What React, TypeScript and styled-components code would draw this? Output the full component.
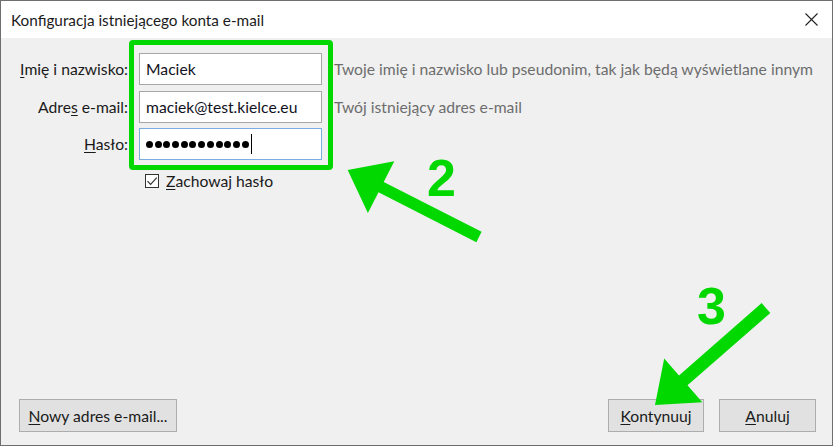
import React from "react";
import styled, { createGlobalStyle } from "styled-components";

const GREEN = "#00d800";
const FONT = `"Lato", "Noto Sans", sans-serif`;

const GlobalStyle = createGlobalStyle`
  html, body { margin: 0; padding: 0; background: #ffffff; }
  body { font-family: ${FONT}; }
  * { box-sizing: border-box; }
`;

const Window = styled.div`
  position: relative;
  width: 833px;
  height: 446px;
  border: 1px solid #6e6e6e;
  display: flex;
  flex-direction: column;
  background: #f0f0f0;
  font-family: ${FONT};
  font-size: 15.7px;
  color: #1a1a1a;
  overflow: hidden;
`;

const TitleBar = styled.div`
  height: 37px;
  flex: none;
  background: #ffffff;
  display: flex;
  align-items: center;
  justify-content: space-between;
  padding: 0 14px 0 10px;
`;

const Title = styled.span`
  font-size: 15.3px;
  color: #1b1b1b;
  margin-top: 1px;
`;

const CloseIcon = () => (
  <svg width="13" height="13" viewBox="0 0 13 13" style={{ display: "block" }}>
    <path d="M0.5 0.5 L12.5 12.5 M12.5 0.5 L0.5 12.5" stroke="#222" strokeWidth="1.1" fill="none" />
  </svg>
);

const Body = styled.div`
  flex: 1;
  display: flex;
  flex-direction: column;
  padding-top: 15px;
`;

const FormGrid = styled.div`
  display: grid;
  grid-template-columns: 127px 183px 1fr;
  column-gap: 11px;
  row-gap: 5.5px;
  align-items: center;
`;

const Label = styled.label`
  text-align: right;
  white-space: nowrap;
`;

const Field = styled.div<{ $focused?: boolean }>`
  height: 32px;
  background: #ffffff;
  border: 1px solid ${(p) => (p.$focused ? "#7aaee0" : "#a6a6a6")};
  display: flex;
  align-items: center;
  padding-left: 6px;
  color: #111122;
  white-space: nowrap;
`;

const Hint = styled.span`
  margin-left: 1px;
  color: #6d6d6d;
  white-space: nowrap;
`;

const Dot = styled.span`
  display: inline-block;
  width: 7px;
  height: 7px;
  border-radius: 50%;
  background: #000;
  margin-right: 1.7px;
  flex: none;
`;

const Caret = styled.span`
  display: inline-block;
  width: 1px;
  height: 20px;
  background: #000;
  margin-left: 0.5px;
`;

const CheckRow = styled.label`
  display: flex;
  align-items: center;
  gap: 7px;
  margin: 12px 0 0 144px;
`;

const CheckBox = styled.span`
  width: 14px;
  height: 14px;
  border: 1px solid #333;
  background: #fff;
  display: flex;
  align-items: center;
  justify-content: center;
`;

const Buttons = styled.div`
  margin-top: auto;
  display: flex;
  align-items: center;
  padding: 0 16px 13px 18px;
`;

const Button = styled.button<{ $w: number }>`
  width: ${(p) => p.$w}px;
  height: 33px;
  background: #e1e1e1;
  border: 1px solid #adadad;
  font-family: ${FONT};
  font-size: 15.7px;
  color: #1a1a1a;
  padding: 0;
`;

const Spacer = styled.div`
  flex: 1;
`;

const Gap = styled.div`
  width: 15px;
`;

const Highlight = styled.div`
  position: absolute;
  left: 128px;
  top: 39px;
  width: 204px;
  height: 130px;
  border: 5px solid ${GREEN};
  border-radius: 4px;
  pointer-events: none;
`;

const Overlay = styled.svg`
  position: absolute;
  left: -1px;
  top: -1px;
  pointer-events: none;
`;

const Digit = styled.span<{ $x: number; $y: number }>`
  position: absolute;
  left: ${(p) => p.$x}px;
  top: ${(p) => p.$y}px;
  font-family: "Liberation Sans", Arial, sans-serif;
  font-weight: bold;
  font-size: 52px;
  line-height: 1;
  color: ${GREEN};
`;

function arrowPoints(
  tip: [number, number],
  tail: [number, number],
  headLen: number,
  headHalf: number,
  shaftHalf: number
) {
  const dx = tail[0] - tip[0];
  const dy = tail[1] - tip[1];
  const len = Math.hypot(dx, dy);
  const ux = dx / len;
  const uy = dy / len;
  const px = -uy;
  const py = ux;
  const bx = tip[0] + ux * headLen;
  const by = tip[1] + uy * headLen;
  const pts: [number, number][] = [
    tip,
    [bx + px * headHalf, by + py * headHalf],
    [bx + px * shaftHalf, by + py * shaftHalf],
    [tail[0] + px * shaftHalf, tail[1] + py * shaftHalf],
    [tail[0] - px * shaftHalf, tail[1] - py * shaftHalf],
    [bx - px * shaftHalf, by - py * shaftHalf],
    [bx - px * headHalf, by - py * headHalf],
  ];
  return pts.map((p) => `${p[0].toFixed(1)},${p[1].toFixed(1)}`).join(" ");
}

const U = styled.u`
  text-decoration: underline;
  text-underline-offset: 2px;
`;

export default function App() {
  return (
    <>
      <GlobalStyle />
      <Window>
        <TitleBar>
          <Title>Konfiguracja istniejącego konta e-mail</Title>
          <CloseIcon />
        </TitleBar>
        <Body>
          <FormGrid>
            <Label>
              <U>I</U>mię i nazwisko:
            </Label>
            <Field>Maciek</Field>
            <Hint>Twoje imię i nazwisko lub pseudonim, tak jak będą wyświetlane innym</Hint>

            <Label>
              Adre<U>s</U> e-mail:
            </Label>
            <Field>maciek@test.kielce.eu</Field>
            <Hint>Twój istniejący adres e-mail</Hint>

            <Label>
              <U>H</U>asło:
            </Label>
            <Field $focused>
              {Array.from({ length: 12 }).map((_, i) => (
                <Dot key={i} />
              ))}
              <Caret />
            </Field>
            <span />
          </FormGrid>
          <CheckRow>
            <CheckBox>
              <svg width="12" height="12" viewBox="0 0 12 12">
                <path d="M1.5 6.2 L4.6 9.3 L10.8 2.6" stroke="#333" strokeWidth="1.2" fill="none" />
              </svg>
            </CheckBox>
            <span>
              <U>Z</U>achowaj hasło
            </span>
          </CheckRow>
          <Buttons>
            <Button $w={158}>
              <U>N</U>owy adres e-mail...
            </Button>
            <Spacer />
            <Button $w={96}>
              <U>K</U>ontynuuj
            </Button>
            <Gap />
            <Button $w={97}>
              <U>A</U>nuluj
            </Button>
          </Buttons>
        </Body>

        <Highlight />
        <Overlay width="835" height="447" viewBox="0 0 835 447">
          <polygon fill={GREEN} points={arrowPoints([347.7, 170], [479, 237], 37.5, 29, 5.8)} />
          <polygon fill={GREEN} points={arrowPoints([655, 405], [766, 308], 37.5, 29, 6.5)} />
        </Overlay>
        <Digit $x={426} $y={151}>2</Digit>
        <Digit $x={696} $y={279}>3</Digit>
      </Window>
    </>
  );
}
